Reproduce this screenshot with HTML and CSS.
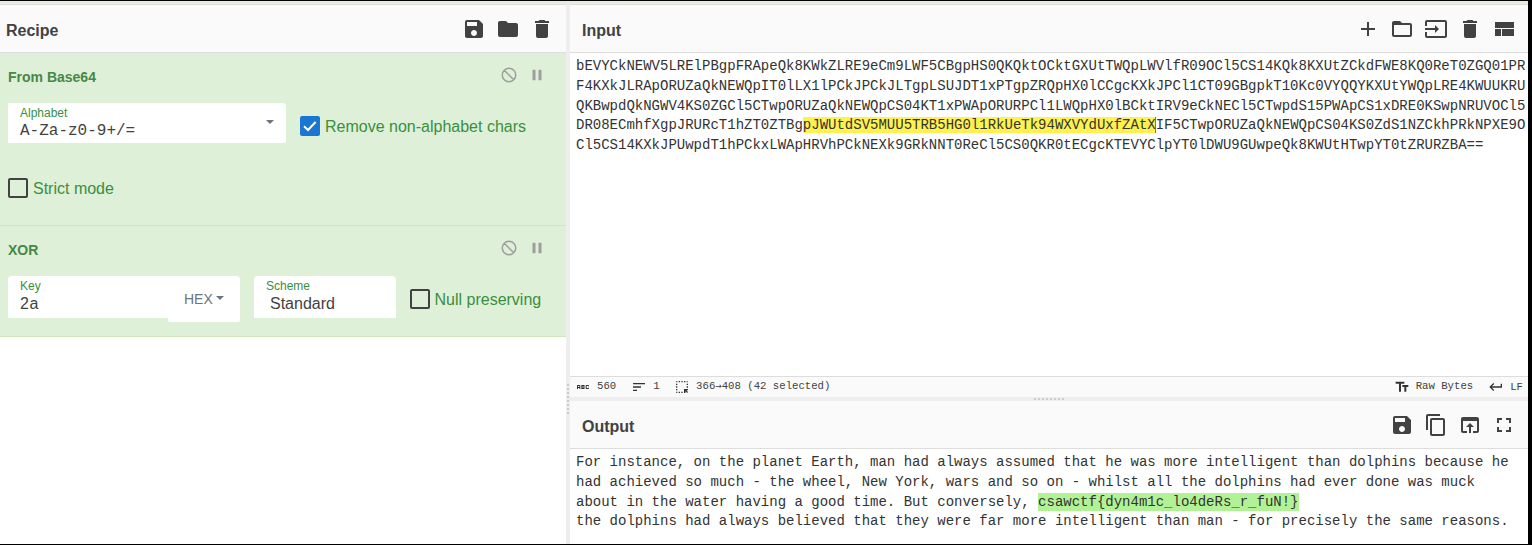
FILE: index.html
```html
<!DOCTYPE html>
<html lang="en">
<head>
<meta charset="utf-8">
<title>CyberChef</title>
<link rel="stylesheet" href="styles.css">
</head>
<body>
<svg class="defs" aria-hidden="true">
  <symbol id="save" viewBox="0 0 24 24"><path d="M17 3H5c-1.110 0-2 .9-2 2v14c0 1.100.89 2 2 2h14c1.100 0 2-.9 2-2V7l-4-4zm-5 16c-1.660 0-3-1.340-3-3s1.340-3 3-3 3 1.340 3 3-1.340 3-3 3zm3-10H5V5h10v4z"/></symbol>
  <symbol id="folder" viewBox="0 0 24 24"><path d="M10 4H4c-1.100 0-1.990.9-1.990 2L2 18c0 1.100.9 2 2 2h16c1.100 0 2-.9 2-2V8c0-1.100-.9-2-2-2h-8l-2-2z"/></symbol>
  <symbol id="folder-open" viewBox="0 0 24 24"><path d="M20 6h-8l-2-2H4c-1.100 0-1.990.9-1.990 2L2 18c0 1.100.9 2 2 2h16c1.100 0 2-.9 2-2V8c0-1.100-.9-2-2-2zm0 12H4V8h16v10z"/></symbol>
  <symbol id="delete" viewBox="0 0 24 24"><path d="M6 19c0 1.100.9 2 2 2h8c1.100 0 2-.9 2-2V7H6v12zM19 4h-3.500l-1-1h-5l-1 1H5v2h14V4z"/></symbol>
  <symbol id="add" viewBox="0 0 24 24"><path d="M19 13h-6v6h-2v-6H5v-2h6V5h2v6h6v2z"/></symbol>
  <symbol id="input" viewBox="0 0 24 24"><path d="M21 3.010H3c-1.100 0-2 .9-2 2V9h2V4.990h18v14.030H3V15H1v4.010c0 1.100.9 1.980 2 1.980h18c1.100 0 2-.88 2-1.980v-14c0-1.110-.9-2-2-2zM11 16l4-4-4-4v3H1v2h10v3z"/></symbol>
  <symbol id="layout" viewBox="0 0 24 24"><path d="M3 19h6v-7H3v7zm7 0h12v-7H10v7zM3 5v6h19V5H3z"/></symbol>
  <symbol id="copy" viewBox="0 0 24 24"><path d="M16 1H4c-1.100 0-2 .9-2 2v14h2V3h12V1zm3 4H8c-1.100 0-2 .9-2 2v14c0 1.100.9 2 2 2h11c1.100 0 2-.9 2-2V7c0-1.100-.9-2-2-2zm0 16H8V7h11v14z"/></symbol>
  <symbol id="open-browser" viewBox="0 0 24 24"><path d="M19 4H5c-1.110 0-2 .9-2 2v12c0 1.100.89 2 2 2h4v-2H5V8h14v10h-4v2h4c1.100 0 2-.9 2-2V6c0-1.100-.89-2-2-2zm-7 6l-4 4h3v6h2v-6h3l-4-4z"/></symbol>
  <symbol id="fullscreen" viewBox="0 0 24 24"><path d="M7 14H5v5h5v-2H7v-3zm-2-4h2V7h3V5H5v5zm12 7h-3v2h5v-5h-2v3zM14 5v2h3v3h2V5h-5z"/></symbol>
  <symbol id="block" viewBox="0 0 24 24"><path fill="none" stroke="#9e9e9e" stroke-width="2" d="M21 12a9 9 0 1 1-18 0 9 9 0 0 1 18 0zM5.640 5.640l12.720 12.720"/></symbol>
  <symbol id="pause" viewBox="0 0 24 24"><path d="M6 19h4V5H6v14zm8-14v14h4V5h-4z"/></symbol>
  <symbol id="abc" viewBox="0 0 24 24"><path d="M21 11h-1.500v-.5h-2v3h2V13H21v1c0 .55-.45 1-1 1h-3c-.55 0-1-.45-1-1v-4c0-.55.45-1 1-1h3c.55 0 1 .45 1 1v1zM8 10v5H6.500v-1.500h-2V15H3v-5c0-.55.45-1 1-1h3c.55 0 1 .45 1 1zm-1.500.5h-2V12h2v-1.500zm7 1.500c.55 0 1 .45 1 1v1c0 .55-.45 1-1 1h-4V9h4c.55 0 1 .45 1 1v1c0 .55-.45 1-1 1zM11 10.500v.75h2v-.75h-2zm2 2.250h-2v.75h2v-.75z"/></symbol>
  <symbol id="sort" viewBox="0 0 24 24"><path d="M3 18h6v-2H3v2zM3 6v2h18V6H3zm0 7h12v-2H3v2z"/></symbol>
  <symbol id="select" viewBox="0 0 24 24"><path d="M17 5h-2V3h2v2zm-2 16h2v-2.590L19.590 21 21 19.590 18.410 17H21v-2h-6v6zm4-12h2V7h-2v2zm0 4h2v-2h-2v2zm-8 8h2v-2h-2v2zM7 5h2V3H7v2zM3 17h2v-2H3v2zm2 4v-2H3c0 1.100.9 2 2 2zM19 3v2h2c0-1.100-.9-2-2-2zm-8 2h2V3h-2v2zM3 9h2V7H3v2zm4 12h2v-2H7v2zm-4-8h2v-2H3v2zm0-8h2V3c-1.100 0-2 .9-2 2z"/></symbol>
  <symbol id="text-size" viewBox="0 0 24 24"><path d="M2.500 4v3h5v12h3V7h5V4h-13zm19 5h-9v3h3v7h3v-7h3V9z"/></symbol>
  <symbol id="return" viewBox="0 0 24 24"><path d="M19 7v4H5.830l3.580-3.590L8 6l-6 6 6 6 1.410-1.410L5.830 13H21V7z"/></symbol>
</svg>
<main class="workspace">
  <section class="recipe">
    <header class="title recipe-title"><h2>Recipe</h2>
      <div class="tools"><svg class="icon"><use href="#save"/></svg><svg class="icon"><use href="#folder"/></svg><svg class="icon"><use href="#delete"/></svg></div>
    </header>
    <article class="op op-base64">
      <div class="op-head"><h3>From Base64</h3><div class="op-tools"><svg class="small-icon"><use href="#block"/></svg><svg class="small-icon"><use href="#pause"/></svg></div></div>
      <div class="args">
        <div class="field alphabet"><div><label>Alphabet</label><span class="value mono">A-Za-z0-9+/=</span></div><i class="caret"></i></div>
        <div class="check remove"><span class="box checked"><svg viewBox="0 0 20 20"><path d="M4 10.300l4 3.700 7.600-8"/></svg></span><span class="check-label">Remove non-alphabet chars</span></div>
      </div>
      <div class="check strict"><span class="box"></span><span class="check-label">Strict mode</span></div>
    </article>
    <article class="op op-xor">
      <div class="op-head"><h3>XOR</h3><div class="op-tools"><svg class="small-icon"><use href="#block"/></svg><svg class="small-icon"><use href="#pause"/></svg></div></div>
      <div class="args">
        <div class="field key"><div><label>Key</label><span class="value key-value">2a</span></div></div>
        <div class="hex"><span>HEX</span><i class="caret"></i></div>
        <div class="field scheme"><div><label>Scheme</label><span class="value indent">Standard</span></div></div>
        <div class="check null"><span class="box"></span><span class="check-label">Null preserving</span></div>
      </div>
    </article>
  </section>
  <div class="gutter vertical"><i></i></div>
  <section class="io">
    <header class="title"><h2>Input</h2>
      <div class="tools"><svg class="icon"><use href="#add"/></svg><svg class="icon"><use href="#folder-open"/></svg><svg class="icon"><use href="#input"/></svg><svg class="icon"><use href="#delete"/></svg><svg class="icon"><use href="#layout"/></svg></div>
    </header>
    <pre class="editor input-text">bEVYCkNEWV5LRElPBgpFRApeQk8KWkZLRE9eCm9LWF5CBgpHS0QKQktOCktGXUtTWQpLWVlfR09OCl5CS14KQk8KXUtZCkdFWE8KQ0ReT0ZGQ01PR
F4KXkJLRApORUZaQkNEWQpIT0lLX1lPCkJPCkJLTgpLSUJDT1xPTgpZRQpHX0lCCgcKXkJPCl1CT09GBgpkT10Kc0VYQQYKXUtYWQpLRE4KWUUKRU
QKBwpdQkNGWV4KS0ZGCl5CTwpORUZaQkNEWQpCS04KT1xPWApORURPCl1LWQpHX0lBCktIRV9eCkNECl5CTwpdS15PWApCS1xDRE0KSwpNRUVOCl5
DR08ECmhfXgpJRURcT1hZT0ZTBg<mark class="selection">pJWUtdSV5MUU5TRB5HG0l1RkUeTk94WXVYdUxfZAtX</mark>IF5CTwpORUZaQkNEWQpCS04KS0ZdS1NZCkhPRkNPXE9O
Cl5CS14KXkJPUwpdT1hPCkxLWApHRVhPCkNEXk9GRkNNT0ReCl5CS0QKR0tECgcKTEVYClpYT0lDWU9GUwpeQk8KWUtHTwpYT0tZRURZBA==</pre>
    <footer class="status">
      <svg class="status-icon"><use href="#abc"/></svg><span class="chars">560</span>
      <svg class="status-icon"><use href="#sort"/></svg><span class="lines">1</span>
      <svg class="status-icon"><use href="#select"/></svg><span>366<b class="arrow">→</b>408 (42 selected)</span>
      <span class="spacer"></span>
      <svg class="status-icon"><use href="#text-size"/></svg><span class="encoding">Raw Bytes</span>
      <svg class="status-icon eol-icon"><use href="#return"/></svg><span class="eol">LF</span>
    </footer>
    <div class="gutter horizontal"><i></i></div>
    <header class="title output-title"><h2>Output</h2>
      <div class="tools"><svg class="icon"><use href="#save"/></svg><svg class="icon"><use href="#copy"/></svg><svg class="icon"><use href="#open-browser"/></svg><svg class="icon"><use href="#fullscreen"/></svg></div>
    </header>
    <pre class="editor output-text">For instance, on the planet Earth, man had always assumed that he was more intelligent than dolphins because he
had achieved so much - the wheel, New York, wars and so on - whilst all the dolphins had ever done was muck
about in the water having a good time. But conversely, <mark class="flag">csawctf{dyn4m1c_lo4deRs_r_fuN!}</mark>
the dolphins had always believed that they were far more intelligent than man - for precisely the same reasons.</pre>
  </section>
</main>
</body>
</html>
```
FILE: styles.css
```css
* { box-sizing: border-box; }
body {
  margin: 0;
  height: 545px;
  overflow: hidden;
  background: #000;
  padding: 1px 4px 1px 0;
  font-family: "Liberation Sans", Arial, sans-serif;
  color: #424242;
}
.defs { display: none; }
.workspace {
  display: flex;
  height: 543px;
  background: #fff;
  border-top: 3px solid #e4eedb;
}
.recipe { width: 566px; flex: none; }
.io { flex: 1; min-width: 0; display: flex; flex-direction: column; }

.title {
  height: 49px;
  flex: none;
  display: flex;
  align-items: center;
  justify-content: space-between;
  background: #fafafa;
  border-top: 1px solid #ddd;
  border-bottom: 1px solid #ddd;
  padding: 0 12px;
}
.title h2 { margin: 5px 0 0; font-size: 16px; line-height: 20px; }
.recipe-title { padding: 0 12px 0 6px; }
.output-title { height: 48px; border-top: 0; }
.tools { display: flex; gap: 10px; }
.icon { width: 24px; height: 24px; fill: #424242; }

.op { background: #dff0d8; border-bottom: 1px solid #d0e6ba; color: #3a8f3e; padding: 0 8px; }
.op-base64 { height: 173px; }
.op-xor { height: 111px; }
.op-head { display: flex; justify-content: space-between; height: 50px; }
.op-head h3 { margin: 16px 0 0; font-size: 14px; line-height: 16px; color: #468847; }
.op-tools { display: flex; gap: 9.5px; padding: 13px 12.5px 0 0; }
.small-icon { width: 18px; height: 18px; fill: #9e9e9e; }
.args { display: flex; align-items: flex-start; }
.field {
  display: flex;
  align-items: flex-start;
  justify-content: space-between;
  background: #fff;
  border-radius: 4px 4px 0 0;
  padding: 3px 12px 0;
}
.field label { display: block; font-size: 12px; line-height: 14px; }
.value { display: block; margin-top: 1px; color: #424242; font-size: 16px; line-height: 20px; }
.mono { font-family: "Liberation Mono", monospace; }
.key-value { letter-spacing: .6px; }
.indent { padding-left: 4px; }
.alphabet { width: 278px; height: 40px; border-radius: 0 4px 2px 0; }
.alphabet .caret { margin-top: 14px; }
.caret { border: 4px solid transparent; border-top-color: #6c757d; border-bottom: 0; }
.check { display: flex; align-items: center; gap: 5px; font-size: 16px; line-height: 20px; white-space: nowrap; }
.check-label { padding-top: 1px; margin-bottom: -1px; }
.box { width: 20px; height: 20px; border: 2px solid #424242; border-radius: 2px; }
.checked { background: #1976d2; border: 0; }
.checked svg { display: block; width: 20px; height: 20px; fill: none; stroke: #fff; stroke-width: 2; }
.remove { margin: 13px 0 0 14px; }
.strict { margin-top: 35px; }
.key { width: 160px; height: 42px; border-radius: 4px 0 0 0; }
.hex {
  width: 72px;
  height: 46px;
  display: flex;
  align-items: center;
  gap: 3px;
  padding-left: 16px;
  background: #fff;
  color: #6c757d;
  font-size: 14px;
  border-radius: 0 4px 2px 2px;
}
.hex .caret { margin-bottom: 2px; }
.scheme { width: 142px; height: 42px; margin-left: 14px; }
.null { margin: 13px 0 0 14px; gap: 4.5px; }

.gutter { background: #eee; flex: none; display: flex; align-items: center; justify-content: center; }
.vertical { width: 4px; }
.vertical i { width: 2px; height: 30px; margin-top: 250px; background: repeating-linear-gradient(#ccc 0 2px, transparent 2px 4px); }
.horizontal { height: 4px; }
.horizontal i { width: 30px; height: 2px; background: repeating-linear-gradient(90deg, #ccc 0 2px, transparent 2px 4px); }

.editor {
  margin: 0;
  padding: 4.350px 0 0 6px;
  font: 14px/19.6px "Liberation Mono", monospace;
  color: #333;
}
.input-text { height: 323px; }
.editor mark { color: inherit; }
.selection { background: #fff14f; box-shadow: inset -1px 0 #777; }
.flag { background: #b2f296; padding: 1px 0; }
.status {
  height: 21px;
  display: flex;
  align-items: center;
  background: #fafafa;
  border-top: 1px solid #ddd;
  padding: 0 5px;
  font: 10.667px/16px "Liberation Mono", monospace;
  white-space: pre;
}
.status span { margin: -2px 0 0 6px; }
.status .chars { margin-right: 15px; }
.status .lines { margin-right: 14.5px; }
.status .encoding { margin-right: 15px; }
.status .eol { margin-top: 0; }
.status .spacer { flex: 1; }
.status-icon { width: 16px; height: 16px; fill: #333; }
.arrow { font: 10.667px/10px "DejaVu Sans Mono", monospace; }
```
